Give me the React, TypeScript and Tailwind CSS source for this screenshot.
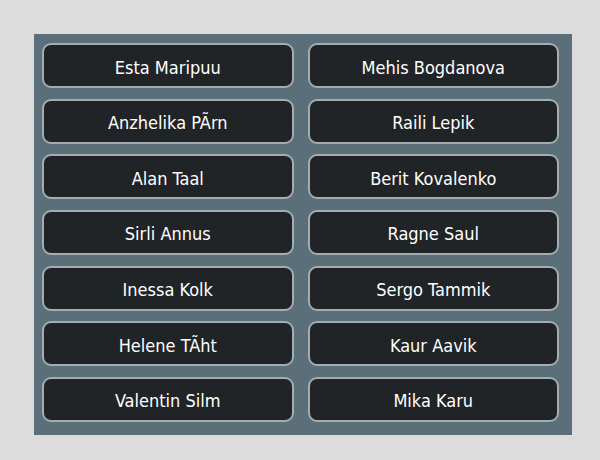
const names: string[][] = [
    ["Esta Maripuu", "Mehis Bogdanova"],
    ["Anzhelika PÃrn", "Raili Lepik"],
    ["Alan Taal", "Berit Kovalenko"],
    ["Sirli Annus", "Ragne Saul"],
    ["Inessa Kolk", "Sergo Tammik"],
    ["Helene TÃht", "Kaur Aavik"],
    ["Valentin Silm", "Mika Karu"],
]

export default function App() {
    return (
        <div className="w-[600px] h-[460px] bg-[#dcdcdc] pt-[34px] pl-[34px] font-['DejaVu_Sans_Condensed','DejaVu_Sans',sans-serif]">
            <div className="w-[538px] h-[401px] bg-[#5a6f7a] pt-[9px] pl-[8px] pr-[13px] pb-[13px] grid grid-cols-2 gap-x-[14px] gap-y-[10.67px]">
                {names.flat().map((n) => (
                    <button key={n} className="h-[45px] pt-[3px] rounded-[9px] bg-[#212427] border-2 border-[#a4acb0] text-white text-[18px] flex items-center justify-center">
                        {n}
                    </button>
                ))}
            </div>
        </div>
    )
}
